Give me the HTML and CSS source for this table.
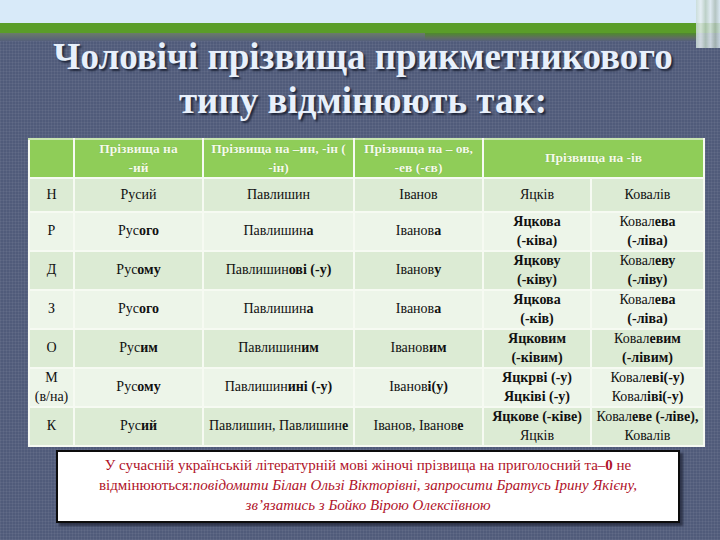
FILE: index.html
```html
<!DOCTYPE html>
<html>
<head>
<meta charset="utf-8">
<title>Slide</title>
<link rel="stylesheet" href="styles.css">
</head>
<body>
<div class="slide">
  <div class="band"></div>
  <div class="greenbar"></div>
  <div class="strip"><div class="strip-left"></div><div class="strip-right"></div></div>
  <div class="edge"></div>
  <h1 class="title">Чоловічі прізвища прикметникового<br>типу відмінюють так:</h1>
  <table class="grid">
    <colgroup>
      <col class="c1"><col class="c2"><col class="c3"><col class="c4"><col class="c5"><col class="c6">
    </colgroup>
    <tr class="head">
      <th></th>
      <th>Прізвища на<br>-ий</th>
      <th>Прізвища на –ин, -ін (<br>-ін)</th>
      <th>Прізвища на – ов,<br>-ев (-єв)</th>
      <th colspan="2">Прізвища на -ів</th>
    </tr>
    <tr class="dark r1">
      <td>Н</td><td>Русий</td><td>Павлишин</td><td>Іванов</td><td>Яцків</td><td>Ковалів</td>
    </tr>
    <tr class="light">
      <td>Р</td><td>Рус<b>ого</b></td><td>Павлишин<b>а</b></td><td>Іванов<b>а</b></td>
      <td><b>Яцкова</b><br><b>(-ківа)</b></td><td>Ковал<b>ева</b><br><b>(-ліва)</b></td>
    </tr>
    <tr class="dark">
      <td>Д</td><td>Рус<b>ому</b></td><td>Павлишин<b>ові (-у)</b></td><td>Іванов<b>у</b></td>
      <td><b>Яцкову</b><br><b>(-ківу)</b></td><td>Ковал<b>еву</b><br><b>(-ліву)</b></td>
    </tr>
    <tr class="light">
      <td>З</td><td>Рус<b>ого</b></td><td>Павлишин<b>а</b></td><td>Іванов<b>а</b></td>
      <td><b>Яцкова</b><br><b>(-ків)</b></td><td>Ковал<b>ева</b><br><b>(-ліва)</b></td>
    </tr>
    <tr class="dark">
      <td>О</td><td>Рус<b>им</b></td><td>Павлишин<b>им</b></td><td>Іванов<b>им</b></td>
      <td><b>Яцковим</b><br><b>(-ківим)</b></td><td>Ковал<b>евим</b><br><b>(-лівим)</b></td>
    </tr>
    <tr class="light">
      <td>М<br>(в/на)</td><td>Рус<b>ому</b></td><td>Павлишин<b>ині (-у)</b></td><td>Іванов<b>і(у)</b></td>
      <td><b>Яцкрві (-у)</b><br><b>Яцківі (-у)</b></td><td>Ковал<b>еві(-у)</b><br>Ковал<b>іві(-у)</b></td>
    </tr>
    <tr class="dark">
      <td>К</td><td>Рус<b>ий</b></td><td>Павлишин, Павлишин<b>е</b></td><td>Іванов, Іванов<b>е</b></td>
      <td><b>Яцкове (-ківе)</b><br>Яцків</td><td>Ковал<b>еве (-ліве),</b><br>Ковалів</td>
    </tr>
  </table>
  <div class="note">
    <p class="note-text">У сучасній українській літературній мові жіночі прізвища на приголосний та–<b>0</b> не<br>відмінюються:<i>повідомити Білан Ользі Вікторівні, запросити Братусь Ірину Якієну,<br>зв’язатись з Бойко Вірою Олексіївною</i></p>
  </div>
</div>
</body>
</html>
```
FILE: styles.css
```css
html, body {
  margin: 0;
  padding: 0;
}
body {
  width: 720px;
  height: 540px;
  overflow: hidden;
  font-family: "Liberation Serif", serif;
}
.slide {
  position: relative;
  width: 720px;
  height: 540px;
  background-color: #505b7a;
  background-image:
    repeating-linear-gradient(0deg, rgba(255,255,255,0.05) 0 1px, transparent 1px 3px),
    repeating-linear-gradient(90deg, rgba(255,255,255,0.05) 0 1px, transparent 1px 3px);
  display: flex;
  flex-direction: column;
  font-family: "Liberation Serif", serif;
}
.band {
  height: 23px;
  background: #d8eaf9;
}
.greenbar {
  height: 10px;
  background: #5a9d29;
}
.strip {
  display: flex;
  height: 8px;
}
.strip-left {
  width: 425px;
  background: linear-gradient(#6b7c6a, #55607a);
}
.strip-right {
  width: 272px;
  background: linear-gradient(#4f8a2c, #5f6e60 60%, #55607a);
}
.edge {
  position: absolute;
  right: 0;
  top: 0;
  width: 24px;
  height: 48px;
  background: linear-gradient(90deg, #c9dcd6 0, #e6eef2 20%, #b8ccc0 40%, #dfe9ef 60%, #aebeb8 80%, #d8e6f0 100%);
  opacity: 0.85;
}
.title {
  margin: -6px 0 0 0;
  text-align: center;
  padding-left: 6px;
  font-family: "Liberation Serif", serif;
  font-weight: bold;
  font-size: 37px;
  line-height: 44px;
  color: #e8f0fb;
  text-shadow: 2px 2px 2px #1f263a;
}
.grid {
  margin: 15px 0 0 28px;
  width: 675px;
  border-collapse: collapse;
  table-layout: fixed;
  font-family: "Liberation Serif", serif;
  font-size: 14px;
  color: #111;
}
.c1 { width: 45px; }
.c2 { width: 129px; }
.c3 { width: 151px; }
.c4 { width: 129px; }
.c5 { width: 108px; }
.c6 { width: 113px; }
.grid th, .grid td {
  border: 2px solid #f6faf2;
  text-align: center;
  vertical-align: middle;
  padding: 0 2px;
  line-height: 18.5px;
  font-family: "Liberation Serif", serif;
}
.grid th {
  background: #8fcd58;
  color: #f4fbe9;
  font-size: 13.5px;
  font-weight: bold;
  text-shadow: 0 0 1px #6fa540;
  border-top-color: #c9e6b0;
}
.dark td { background: #dcebd4; }
.light td { background: #edf5e9; }
.r1 td { height: 32px; }
.note {
  margin: 3px 0 0 56px;
  width: 620px;
  height: 69px;
  background: #fff;
  border: 2px solid #0c0c0c;
  box-shadow: 3px 3px 2px rgba(20, 24, 40, 0.6);
}
.note-text {
  margin: 3px 0 0 0;
  text-align: center;
  font-family: "Liberation Serif", serif;
  font-size: 15px;
  line-height: 20px;
  color: #b01229;
}
```
